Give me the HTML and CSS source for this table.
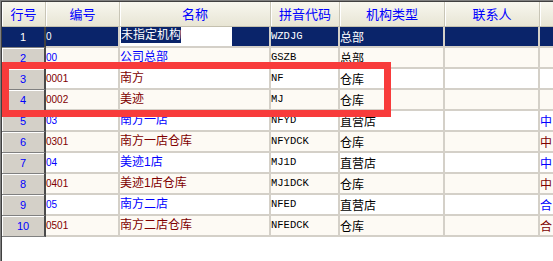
FILE: index.html
```html
<!DOCTYPE html>
<html lang="zh">
<head>
<meta charset="utf-8">
<link rel="stylesheet" href="styles.css">
</head>
<body>
<div class="frame">
  <div class="inner">
    <table class="grid">
      <colgroup>
        <col class="c1"><col class="c2"><col class="c3"><col class="c4"><col class="c5"><col class="c6"><col class="c7">
      </colgroup>
      <thead>
        <tr><th>行号</th><th>编号</th><th>名称</th><th>拼音代码</th><th>机构类型</th><th>联系人</th><th></th></tr>
      </thead>
      <tbody>
        <tr class="sel"><td class="no">1</td><td class="code">0</td><td class="name"><span class="editor"><span class="selt">未指定机构</span></span></td><td class="py">WZDJG</td><td class="type">总部</td><td></td><td></td></tr>
        <tr class="alt blue"><td class="no">2</td><td class="code">00</td><td class="name">公司总部</td><td class="py">GSZB</td><td class="type">总部</td><td></td><td></td></tr>
        <tr class="red"><td class="no">3</td><td class="code">0001</td><td class="name">南方</td><td class="py">NF</td><td class="type">仓库</td><td></td><td></td></tr>
        <tr class="alt red"><td class="no">4</td><td class="code">0002</td><td class="name">美迹</td><td class="py">MJ</td><td class="type">仓库</td><td></td><td></td></tr>
        <tr class="blue"><td class="no">5</td><td class="code">03</td><td class="name">南方一店</td><td class="py">NFYD</td><td class="type">直营店</td><td></td><td class="last">中</td></tr>
        <tr class="alt red"><td class="no">6</td><td class="code">0301</td><td class="name">南方一店仓库</td><td class="py">NFYDCK</td><td class="type">仓库</td><td></td><td class="last">中</td></tr>
        <tr class="blue"><td class="no">7</td><td class="code">04</td><td class="name">美迹1店</td><td class="py">MJ1D</td><td class="type">直营店</td><td></td><td class="last">中</td></tr>
        <tr class="alt red"><td class="no">8</td><td class="code">0401</td><td class="name">美迹1店仓库</td><td class="py">MJ1DCK</td><td class="type">仓库</td><td></td><td class="last">中</td></tr>
        <tr class="blue"><td class="no">9</td><td class="code">05</td><td class="name">南方二店</td><td class="py">NFED</td><td class="type">直营店</td><td></td><td class="last">合</td></tr>
        <tr class="alt red"><td class="no">10</td><td class="code">0501</td><td class="name">南方二店仓库</td><td class="py">NFEDCK</td><td class="type">仓库</td><td></td><td class="last">合</td></tr>
      </tbody>
    </table>
    <div class="mark"></div>
  </div>
</div>
</body>
</html>
```
FILE: styles.css
```css
html, body {
  margin: 0;
  padding: 0;
  background: #ffffff;
}
.frame {
  width: 553px;
  height: 261px;
  overflow: hidden;
  border-top: 1px solid #808080;
  border-left: 1px solid #808080;
  box-sizing: border-box;
}
.inner {
  position: relative;
  height: 100%;
  border-top: 1px solid #404040;
  border-left: 1px solid #404040;
  box-sizing: border-box;
  background: #ffffff;
}
.grid {
  border-collapse: separate;
  border-spacing: 0;
  table-layout: fixed;
  width: 598px;
  font-family: "Liberation Sans", "Noto Sans CJK SC", sans-serif;
}
.c1 { width: 44px; }
.c2 { width: 74px; }
.c3 { width: 151px; }
.c4 { width: 69px; }
.c5 { width: 105px; }
.c6 { width: 95px; }
.c7 { width: 60px; }

th {
  height: 25px;
  padding: 0;
  box-sizing: border-box;
  background: linear-gradient(#f8f7ef, #eeecdf 60%, #e8e5d4);
  border-bottom: 1px solid #c4c0ae;
  border-right: 1px solid #c8c5b6;
  box-shadow: inset 1px 0 #ffffff;
  color: #0000ff;
  font-family: "Noto Sans CJK SC", sans-serif;
  font-weight: normal;
  font-size: 13px;
  line-height: 24px;
  text-align: center;
  vertical-align: middle;
}
td {
  height: 21px;
  padding: 0;
  box-sizing: border-box;
  border-right: 2px solid #d4d0c8;
  border-bottom: 2px solid #d4d0c8;
  background: #ffffff;
  white-space: nowrap;
  overflow: hidden;
  vertical-align: middle;
  line-height: 19px;
}
tr.alt td { background: #fdfaf4; }

td.no {
  background: #d4d0c8;
  border-right: 2px solid #4a4a4a;
  border-bottom: 1px solid #808080;
  box-shadow: inset 1px 1px #ffffff;
  color: #0000ff;
  font-size: 11px;
  text-align: center;
  line-height: 20px;
}
tr.alt td.no { background: #d4d0c8; }

td.code {
  font-size: 10px;
}
td.name, td.type, td.last {
  font-family: "Noto Sans CJK SC", sans-serif;
  font-size: 12px;
}
td.name { font-family: "Liberation Sans", "Noto Sans CJK SC", sans-serif; }
td.py {
  font-family: "Liberation Mono", monospace;
  font-size: 10.5px;
  color: #000000;
}
td.type { color: #000000; }

tr.blue td { color: #0000ff; }
tr.red td { color: #800000; }
tr.blue td.py, tr.red td.py, tr.blue td.type, tr.red td.type { color: #000000; }
tr.blue td.no, tr.red td.no { color: #0000ff; }

tr.sel td, tr.sel td.no {
  background: #0a246a;
  color: #ffffff;
}
tr.sel td.no { box-shadow: none; border-right-color: #404040; }
tr.sel td.py, tr.sel td.type { color: #ffffff; }

.editor {
  display: block;
  height: 19px;
  width: 112px;
  background: #ffffff;
  padding-left: 1px;
  box-sizing: border-box;
}
.selt {
  display: inline-block;
  height: 16px;
  line-height: 16px;
  background: #0a246a;
  color: #ffffff;
  vertical-align: top;
}

.mark {
  position: absolute;
  left: 0;
  top: 60px;
  width: 389px;
  height: 55px;
  border: 7px solid #f83b3b;
  box-sizing: border-box;
}
```
